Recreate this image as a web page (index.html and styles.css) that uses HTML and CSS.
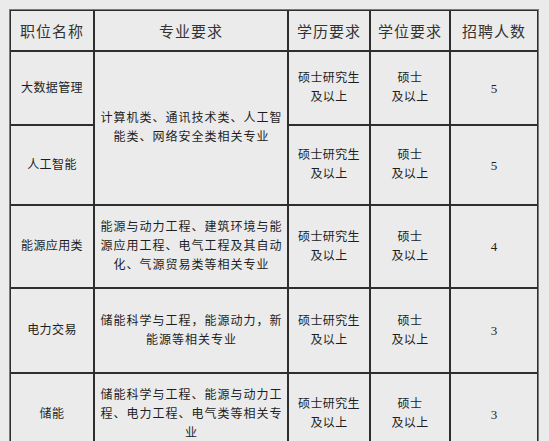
FILE: index.html
```html
<!DOCTYPE html>
<html lang="zh">
<head>
<meta charset="utf-8">
<link rel="stylesheet" href="styles.css">
</head>
<body>
<table class="jobs">
  <colgroup>
    <col class="c-name">
    <col class="c-major">
    <col class="c-edu">
    <col class="c-deg">
    <col class="c-num">
  </colgroup>
  <thead>
    <tr class="r-head">
      <th>职位名称</th>
      <th>专业要求</th>
      <th>学历要求</th>
      <th>学位要求</th>
      <th>招聘人数</th>
    </tr>
  </thead>
  <tbody>
    <tr class="r1">
      <td>大数据管理</td>
      <td class="major" rowspan="2">计算机类、通讯技术类、人工智能类、网络安全类相关专业</td>
      <td>硕士研究生<br>及以上</td>
      <td>硕士<br>及以上</td>
      <td class="num">5</td>
    </tr>
    <tr class="r2">
      <td>人工智能</td>
      <td>硕士研究生<br>及以上</td>
      <td>硕士<br>及以上</td>
      <td class="num">5</td>
    </tr>
    <tr class="r3">
      <td>能源应用类</td>
      <td class="major">能源与动力工程、建筑环境与能源应用工程、电气工程及其自动化、气源贸易类等相关专业</td>
      <td>硕士研究生<br>及以上</td>
      <td>硕士<br>及以上</td>
      <td class="num">4</td>
    </tr>
    <tr class="r4">
      <td>电力交易</td>
      <td class="major">储能科学与工程，能源动力，新能源等相关专业</td>
      <td>硕士研究生<br>及以上</td>
      <td>硕士<br>及以上</td>
      <td class="num">3</td>
    </tr>
    <tr class="r5">
      <td>储能</td>
      <td class="major">储能科学与工程、能源与动力工程、电力工程、电气类等相关专业</td>
      <td>硕士研究生<br>及以上</td>
      <td>硕士<br>及以上</td>
      <td class="num">3</td>
    </tr>
  </tbody>
</table>
</body>
</html>
```

FILE: styles.css
```css
html, body {
  margin: 0;
  padding: 0;
  background: #ebebeb;
}

body {
  padding: 9px 0 0 9px;
  font-family: "Liberation Serif", "Noto Sans CJK SC", sans-serif;
  color: #1e1e1e;
}

.jobs {
  border-collapse: separate;
  border-spacing: 0;
  border: 1px solid #7a7a7a;
  table-layout: fixed;
  width: 530px;
  background: #ebebeb;
}

.c-name { width: 84px; }
.c-major { width: 194px; }
.c-edu { width: 82px; }
.c-deg { width: 80px; }
.c-num { width: 88px; }

.jobs th,
.jobs td {
  border: 1px solid #2e2e2e;
  padding: 0 4px;
  text-align: center;
  vertical-align: middle;
  box-sizing: border-box;
}

.jobs th {
  font-family: "Noto Sans CJK SC", sans-serif;
  font-weight: normal;
  font-size: 15px;
  letter-spacing: 1px;
  color: #333;
  padding: 0;
}

.jobs td {
  font-size: 12px;
  line-height: 19px;
  letter-spacing: 0.4px;
}

.jobs td.major {
  letter-spacing: 1px;
  padding: 0 4px 0 5px;
}

.jobs td.num {
  font-size: 13px;
  letter-spacing: 0;
}

.r-head { height: 41px; }
.r1 { height: 74px; }
.r2 { height: 80px; }
.r3 { height: 83px; }
.r4 { height: 85px; }
.r5 { height: 82px; }
```
